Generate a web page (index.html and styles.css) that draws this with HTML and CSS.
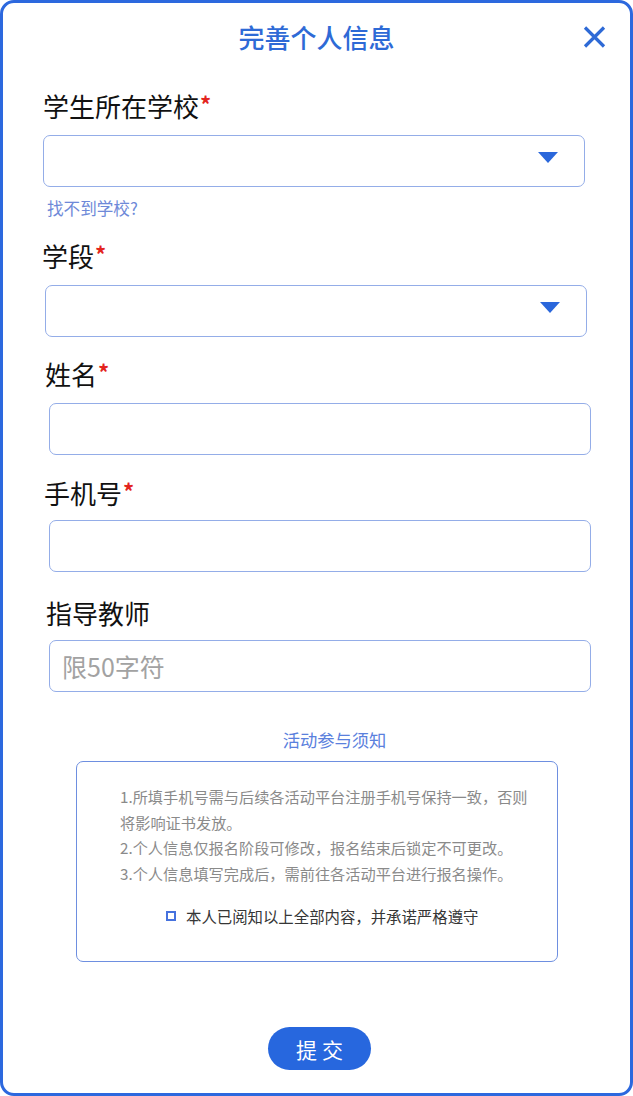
FILE: index.html
```html
<!DOCTYPE html>
<html lang="zh-CN">
<head>
<meta charset="utf-8">
<title>完善个人信息</title>
<link rel="stylesheet" href="styles.css">
</head>
<body>
<div class="frame">
  <header class="header">
    <span></span>
    <h1 class="title">完善个人信息</h1>
    <button class="close" type="button" aria-label="关闭">
      <svg width="23" height="22" viewBox="0 0 23 22"><path d="M2 1.5 L21 20.5 M21 1.5 L2 20.5" stroke="#2e6ad6" stroke-width="3.2" stroke-linecap="butt" fill="none"/></svg>
    </button>
  </header>

  <form class="form">
    <label class="label l1">学生所在学校<span class="req">*</span></label>
    <div class="control select s1"><span class="caret"></span></div>
    <a class="hint">找不到学校?</a>

    <label class="label l2">学段<span class="req">*</span></label>
    <div class="control select s2"><span class="caret"></span></div>

    <label class="label l3">姓名<span class="req">*</span></label>
    <input class="control input i3" type="text">

    <label class="label l4">手机号<span class="req">*</span></label>
    <input class="control input i4" type="text">

    <label class="label l5">指导教师</label>
    <input class="control input i5" type="text" placeholder="限50字符">

    <div class="notice-title">活动参与须知</div>
    <div class="notice">
      <p class="notice-text">1.所填手机号需与后续各活动平台注册手机号保持一致，否则<br>将影响证书发放。</p>
      <p class="notice-text">2.个人信息仅报名阶段可修改，报名结束后锁定不可更改。</p>
      <p class="notice-text">3.个人信息填写完成后，需前往各活动平台进行报名操作。</p>
      <div class="agree"><span class="checkbox"></span><span>本人已阅知以上全部内容，并承诺严格遵守</span></div>
    </div>

    <div class="actions"><button class="submit" type="button">提交</button></div>
  </form>
</div>
</body>
</html>
```

FILE: styles.css
```css
* { box-sizing: border-box; }
html, body { margin: 0; padding: 0; background: #fff; }
body {
  font-family: "Noto Sans CJK SC", "Noto Sans", sans-serif;
  color: #111;
}
.frame {
  width: 633px;
  height: 1096px;
  border: 3px solid #2c68de;
  border-radius: 14px;
  padding-top: 21px;
  background: #fff;
}
.header {
  display: grid;
  grid-template-columns: 1fr auto 1fr;
  align-items: center;
  height: 26px;
}
.title {
  margin: 0;
  font-size: 26px;
  line-height: 26px;
  font-weight: 500;
  color: #2e6ad6;
  letter-spacing: 0;
}
.close {
  justify-self: end;
  margin-right: 24px;
  border: 0;
  background: none;
  padding: 0;
  width: 23px;
  height: 22px;
  display: flex;
}
.form {
  display: flex;
  flex-direction: column;
  align-items: flex-start;
  padding-left: 40px;
}
.label {
  display: block;
  font-size: 26px;
  line-height: 26px;
  height: 26px;
  color: #111;
  white-space: nowrap;
}
.req {
  color: #e3241d;
  font-size: 22px;
  line-height: 20px;
  font-weight: 700;
  vertical-align: top;
  margin-left: 1px;
}
.control {
  width: 542px;
  height: 52px;
  border: 1px solid #94ade8;
  border-radius: 7px;
  background: #fff;
}
.select {
  display: flex;
  align-items: center;
  justify-content: flex-end;
  padding-right: 26px;
}
.caret {
  width: 0;
  height: 0;
  border-left: 10.5px solid transparent;
  border-right: 10.5px solid transparent;
  border-top: 11px solid #2a67db;
  margin-bottom: 7px;
}
.input {
  display: block;
  padding: 0 12px;
  font-family: inherit;
  font-size: 25px;
  color: #333;
  outline: none;
}
.input::placeholder { color: #a2a2a2; }
.hint {
  font-size: 16.6px;
  line-height: 16px;
  color: #6e89d8;
  margin-top: 13px;
  margin-left: 4px;
}
.l1 { margin-top: 43px; margin-left: 0; }
.s1 { margin-top: 16px; margin-left: 0; }
.l2 { margin-top: 27px; margin-left: -1px; }
.s2 { margin-top: 16px; margin-left: 2px; }
.l3 { margin-top: 24px; margin-left: 2px; }
.i3 { margin-top: 16px; margin-left: 6px; }
.l4 { margin-top: 25px; margin-left: 1px; }
.i4 { margin-top: 14px; margin-left: 6px; }
.l5 { margin-top: 28px; margin-left: 3px; }
.i5 { margin-top: 14px; margin-left: 6px; }

.notice-title {
  align-self: stretch;
  text-align: center;
  margin-top: 39px;
  padding-right: 4px;
  font-size: 17.3px;
  line-height: 17px;
  color: #5a80dd;
}
.notice {
  margin-top: 13px;
  margin-left: 33px;
  width: 482px;
  height: 201px;
  border: 1.5px solid #6e8fe0;
  border-radius: 7px;
  padding: 22px 20px 0 43px;
}
.notice-text {
  margin: 0;
  font-size: 15.2px;
  line-height: 25.6px;
  color: #8a8a8a;
  white-space: nowrap;
}
.agree {
  display: flex;
  align-items: center;
  justify-content: flex-start;
  gap: 10px;
  margin-top: 18px;
  margin-left: 46px;
  font-size: 15.4px;
  line-height: 24px;
  color: #363636;
}
.checkbox {
  width: 10px;
  height: 10px;
  border: 2px solid #4672de;
  flex: none;
}
.actions {
  align-self: stretch;
  display: flex;
  justify-content: center;
  padding-right: 34px;
  margin-top: 65px;
}
.submit {
  width: 103px;
  height: 43px;
  border: 0;
  border-radius: 22px;
  background: #2767de;
  color: #fff;
  font-family: inherit;
  font-size: 21px;
  letter-spacing: 5px;
  text-indent: 5px;
  padding: 0;
}
```
